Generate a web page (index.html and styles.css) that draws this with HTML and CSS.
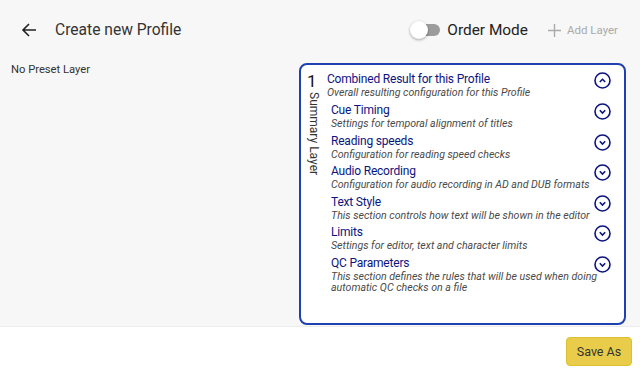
FILE: index.html
```html
<!DOCTYPE html>
<html lang="en">
  <head>
    <meta charset="UTF-8" />
    <title>Create new Profile</title>
    <link rel="stylesheet" href="styles.css">
  </head>
  <body>
    <div class="page">
      <header class="topbar">
        <button class="back" aria-label="Back">
          <svg width="16" height="16" viewBox="0 0 16 16"><path d="M15 8H2M8 2L2 8l6 6" fill="none" stroke="#222" stroke-width="1.6"/></svg>
        </button>
        <h1>Create new Profile</h1>
        <div class="spacer"></div>
        <label class="toggle">
          <span class="track"><span class="thumb"></span></span>
          <span class="toggle-label">Order Mode</span>
        </label>
        <button class="add-layer">
          <svg width="13" height="13" viewBox="0 0 13 13"><path d="M6.5 0v13M0 6.5h13" stroke="#aaa" stroke-width="1.4"/></svg>
          Add Layer
        </button>
      </header>

      <main class="content">
        <div class="preset">No Preset Layer</div>
        <section class="layer-card">
          <div class="layer-side">
            <div class="layer-num">1</div>
            <div class="layer-name">Summary Layer</div>
          </div>
          <div class="layer-body">
            <div class="item item-top">
              <div class="item-text">
                <div class="item-title">Combined Result for this Profile</div>
                <div class="item-desc">Overall resulting configuration for this Profile</div>
              </div>
              <svg class="chev" width="17" height="17" viewBox="0 0 17 17"><circle cx="8.5" cy="8.5" r="7.5" fill="none" stroke="#0c1480" stroke-width="1.6"/><path d="M5.8 10L8.5 7.3 11.2 10" fill="none" stroke="#0c1480" stroke-width="1.6"/></svg>
            </div>
            <div class="item">
              <div class="item-text">
                <div class="item-title">Cue Timing</div>
                <div class="item-desc">Settings for temporal alignment of titles</div>
              </div>
              <svg class="chev" width="17" height="17" viewBox="0 0 17 17"><circle cx="8.5" cy="8.5" r="7.5" fill="none" stroke="#0c1480" stroke-width="1.6"/><path d="M5.8 7.3L8.5 10 11.2 7.3" fill="none" stroke="#0c1480" stroke-width="1.6"/></svg>
            </div>
            <div class="item">
              <div class="item-text">
                <div class="item-title">Reading speeds</div>
                <div class="item-desc">Configuration for reading speed checks</div>
              </div>
              <svg class="chev" width="17" height="17" viewBox="0 0 17 17"><circle cx="8.5" cy="8.5" r="7.5" fill="none" stroke="#0c1480" stroke-width="1.6"/><path d="M5.8 7.3L8.5 10 11.2 7.3" fill="none" stroke="#0c1480" stroke-width="1.6"/></svg>
            </div>
            <div class="item">
              <div class="item-text">
                <div class="item-title">Audio Recording</div>
                <div class="item-desc">Configuration for audio recording in AD and DUB formats</div>
              </div>
              <svg class="chev" width="17" height="17" viewBox="0 0 17 17"><circle cx="8.5" cy="8.5" r="7.5" fill="none" stroke="#0c1480" stroke-width="1.6"/><path d="M5.8 7.3L8.5 10 11.2 7.3" fill="none" stroke="#0c1480" stroke-width="1.6"/></svg>
            </div>
            <div class="item">
              <div class="item-text">
                <div class="item-title">Text Style</div>
                <div class="item-desc">This section controls how text will be shown in the editor</div>
              </div>
              <svg class="chev" width="17" height="17" viewBox="0 0 17 17"><circle cx="8.5" cy="8.5" r="7.5" fill="none" stroke="#0c1480" stroke-width="1.6"/><path d="M5.8 7.3L8.5 10 11.2 7.3" fill="none" stroke="#0c1480" stroke-width="1.6"/></svg>
            </div>
            <div class="item">
              <div class="item-text">
                <div class="item-title">Limits</div>
                <div class="item-desc">Settings for editor, text and character limits</div>
              </div>
              <svg class="chev" width="17" height="17" viewBox="0 0 17 17"><circle cx="8.5" cy="8.5" r="7.5" fill="none" stroke="#0c1480" stroke-width="1.6"/><path d="M5.8 7.3L8.5 10 11.2 7.3" fill="none" stroke="#0c1480" stroke-width="1.6"/></svg>
            </div>
            <div class="item">
              <div class="item-text">
                <div class="item-title">QC Parameters</div>
                <div class="item-desc">This section defines the rules that will be used when doing automatic QC checks on a file</div>
              </div>
              <svg class="chev" width="17" height="17" viewBox="0 0 17 17"><circle cx="8.5" cy="8.5" r="7.5" fill="none" stroke="#0c1480" stroke-width="1.6"/><path d="M5.8 7.3L8.5 10 11.2 7.3" fill="none" stroke="#0c1480" stroke-width="1.6"/></svg>
            </div>
          </div>
        </section>
      </main>

      <footer class="footer">
        <button class="save">Save As</button>
      </footer>
    </div>
  </body>
</html>
```

FILE: styles.css
```css
body {
  margin: 0;
  font-family: Roboto, "Noto Sans", sans-serif;
  color: #222;
  background: #fff;
}
.page {
  height: 375px;
  display: flex;
  flex-direction: column;
}
.topbar {
  height: 60px;
  display: flex;
  align-items: center;
  background: #f7f7f7;
  padding: 0 22px 0 21px;
  box-sizing: border-box;
}
.back {
  background: none;
  border: none;
  padding: 0;
  width: 16px;
  height: 16px;
  display: flex;
  cursor: pointer;
}
.topbar h1 {
  margin: 0 0 0 18px;
  font-size: 15.6px;
  font-weight: 400;
  color: #333;
}
.spacer {
  flex: 1;
}
.toggle {
  display: flex;
  align-items: center;
  gap: 7px;
}
.track {
  position: relative;
  width: 26px;
  height: 12px;
  border-radius: 6px;
  background: #9c9c9c;
}
.thumb {
  position: absolute;
  left: -4px;
  top: -3px;
  width: 18px;
  height: 18px;
  border-radius: 50%;
  background: #fff;
  box-shadow: 0 1px 3px rgba(0, 0, 0, 0.35);
}
.toggle-label {
  font-size: 15.4px;
  color: #222;
}
.add-layer {
  margin-left: 20px;
  display: flex;
  align-items: center;
  gap: 6px;
  background: none;
  border: none;
  padding: 0;
  font-family: inherit;
  font-size: 11.5px;
  color: #aaa;
}
.content {
  flex: 1;
  display: flex;
  justify-content: space-between;
  align-items: flex-start;
  background: #f7f7f7;
  padding: 3px 14px 0 11px;
  border-bottom: 1px solid #ececec;
}
.preset {
  font-size: 11.2px;
  color: #333;
}
.layer-card {
  width: 327px;
  height: 262px;
  box-sizing: border-box;
  border: 2px solid #1e40b0;
  border-radius: 8px;
  background: #fff;
  display: flex;
  padding: 7px 0 0 6px;
}
.layer-side {
  width: 20px;
  display: flex;
  flex-direction: column;
  align-items: flex-start;
}
.layer-num {
  font-size: 17px;
  line-height: 18px;
  color: #111;
}
.layer-name {
  writing-mode: vertical-rl;
  font-size: 12px;
  color: #333;
  margin-top: 2px;
}
.layer-body {
  flex: 1;
  padding-right: 13px;
}
.item {
  display: flex;
  align-items: flex-start;
  justify-content: space-between;
  padding-left: 4px;
  margin-bottom: 4.6px;
}
.item-top {
  padding-left: 0;
  margin-bottom: 5px;
}
.item-title {
  font-size: 12px;
  letter-spacing: -0.2px;
  line-height: 15px;
  color: #0c1480;
}
.item-desc {
  font-size: 10.6px;
  line-height: 11px;
  font-style: italic;
  color: #4a4a4a;
  margin-right: -14px;
}
.chev {
  flex-shrink: 0;
}
.footer {
  height: 48px;
  display: flex;
  align-items: center;
  justify-content: flex-end;
  padding-right: 8px;
}
.save {
  width: 66px;
  height: 29px;
  background: #e8cc4a;
  border: 1px solid #ddc030;
  border-radius: 4px;
  font-family: inherit;
  font-size: 12.5px;
  color: #333;
  cursor: pointer;
}
```
